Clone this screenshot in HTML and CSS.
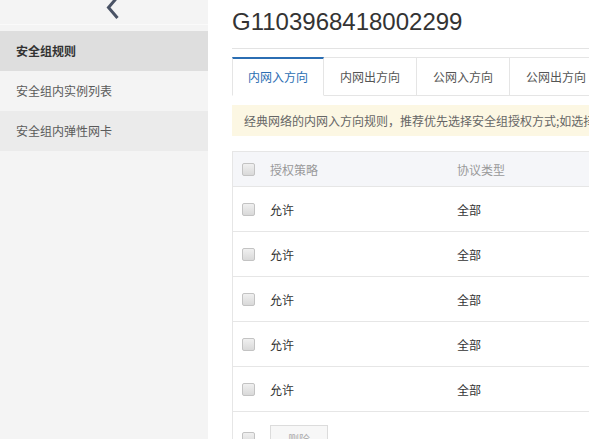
FILE: index.html
```html
<!DOCTYPE html>
<html lang="zh-CN">
<head>
<meta charset="utf-8">
<title>安全组规则</title>
<link rel="stylesheet" href="styles.css">
</head>
<body>
<div class="page">
  <aside class="sidebar">
    <div class="back">
      <svg class="chev" width="16" height="20" viewBox="0 0 16 20"><path d="M12.5 -3 L3.5 7.5 L12.5 18" fill="none" stroke="#4a5365" stroke-width="3"/></svg>
    </div>
    <nav class="menu">
      <div class="item active">安全组规则</div>
      <div class="item">安全组内实例列表</div>
      <div class="item hover">安全组内弹性网卡</div>
    </nav>
  </aside>
  <main class="main">
    <h1 class="title">G1103968418002299</h1>
    <div class="tabs">
      <div class="tab on">内网入方向</div>
      <div class="tab">内网出方向</div>
      <div class="tab">公网入方向</div>
      <div class="tab">公网出方向</div>
      <div class="tab-rest"></div>
    </div>
    <div class="notice">经典网络的内网入方向规则，推荐优先选择安全组授权方式;如选择IP地址段授权方式，请注意安全风险。</div>
    <div class="table">
      <div class="row head">
        <div class="c-cb"><span class="cb"></span></div>
        <div class="c-1">授权策略</div>
        <div class="c-2">协议类型</div>
      </div>
      <div class="row"><div class="c-cb"><span class="cb"></span></div><div class="c-1">允许</div><div class="c-2">全部</div></div>
      <div class="row"><div class="c-cb"><span class="cb"></span></div><div class="c-1">允许</div><div class="c-2">全部</div></div>
      <div class="row"><div class="c-cb"><span class="cb"></span></div><div class="c-1">允许</div><div class="c-2">全部</div></div>
      <div class="row"><div class="c-cb"><span class="cb"></span></div><div class="c-1">允许</div><div class="c-2">全部</div></div>
      <div class="row"><div class="c-cb"><span class="cb"></span></div><div class="c-1">允许</div><div class="c-2">全部</div></div>
      <div class="foot">
        <div class="c-cb"><span class="cb"></span></div>
        <button class="btn">删除</button>
      </div>
    </div>
  </main>
</div>
</body>
</html>
```
FILE: styles.css
```css
html, body {
  margin: 0;
  padding: 0;
  height: 100%;
  overflow: hidden;
  background: #fff;
}
body {
  font-family: "Liberation Sans", "Noto Sans CJK SC", sans-serif;
  font-size: 12px;
  color: #333;
}
.page {
  display: flex;
  height: 439px;
}
.sidebar {
  width: 208px;
  flex: none;
  background: #f4f4f4;
}
.back {
  height: 24px;
  border-bottom: 1px solid #fafafa;
  margin-bottom: 6px;
  display: flex;
  justify-content: center;
  align-items: flex-start;
  overflow: hidden;
}
.chev {
  margin-left: 18px;
  margin-top: 0;
}
.menu {
  display: flex;
  flex-direction: column;
}
.item {
  height: 40px;
  line-height: 40px;
  padding-left: 16px;
  color: #5a5a5a;
  font-family: "Noto Sans CJK SC", sans-serif;
  font-size: 12px;
}
.item.active {
  background: #dedede;
  color: #333;
  font-weight: bold;
}
.item.hover {
  background: #ebebeb;
}
.main {
  flex: none;
  width: 700px;
  padding-left: 24px;
}
.title {
  margin: 0;
  padding-top: 7px;
  height: 41px;
  font-weight: normal;
  font-size: 24px;
  line-height: 30px;
  color: #333;
  border-bottom: 1px solid #e3e3e3;
}
.tabs {
  margin-top: 8px;
  display: flex;
  height: 39px;
}
.tab {
  width: 93px;
  border-top: 1px solid #e5e5e5;
  border-right: 1px solid #e5e5e5;
  border-bottom: 1px solid #e5e5e5;
  box-sizing: border-box;
  height: 39px;
  text-align: center;
  line-height: 38px;
  color: #555;
  font-family: "Noto Sans CJK SC", sans-serif;
  font-size: 12px;
}
.tab.on {
  width: 92px;
  border-top: 2px solid #2b6eb3;
  border-bottom-color: #fff;
  border-left: 1px solid #e5e5e5;
  color: #2b6eb3;
  line-height: 36px;
}
.tab-rest {
  flex: 1;
  border-bottom: 1px solid #e5e5e5;
}
.notice {
  margin-top: 9px;
  height: 31px;
  line-height: 31px;
  padding-left: 12px;
  background: #fcf7e3;
  color: #666;
  white-space: nowrap;
  font-family: "Noto Sans CJK SC", sans-serif;
}
.table {
  margin-top: 15px;
  border-left: 1px solid #e6e6e6;
}
.row {
  display: flex;
  align-items: center;
  height: 45px;
  border-bottom: 1px solid #e6e6e6;
  box-sizing: border-box;
  font-family: "Noto Sans CJK SC", sans-serif;
  color: #333;
}
.row.head {
  height: 36px;
  background: #f5f6f9;
  border-top: 1px solid #e6e6e6;
  color: #999;
}
.c-cb {
  width: 37px;
  flex: none;
  display: flex;
  padding-left: 9px;
  box-sizing: border-box;
}
.c-1 {
  width: 187px;
  flex: none;
}
.c-2 {
  flex: 1;
}
.cb {
  width: 11px;
  height: 11px;
  border: 1px solid #c3c3c3;
  border-radius: 2px;
  background: linear-gradient(#f0f0f0, #d9d9d9);
  display: block;
}
.foot {
  display: flex;
  align-items: flex-start;
  padding-top: 13px;
}
.foot .c-cb {
  padding-top: 7px;
}
.btn {
  width: 58px;
  height: 28px;
  border: 1px solid #dcdcdc;
  background: #f7f7f7;
  color: #aaa;
  font-family: "Noto Sans CJK SC", sans-serif;
  font-size: 11px;
  padding: 0;
}
```
